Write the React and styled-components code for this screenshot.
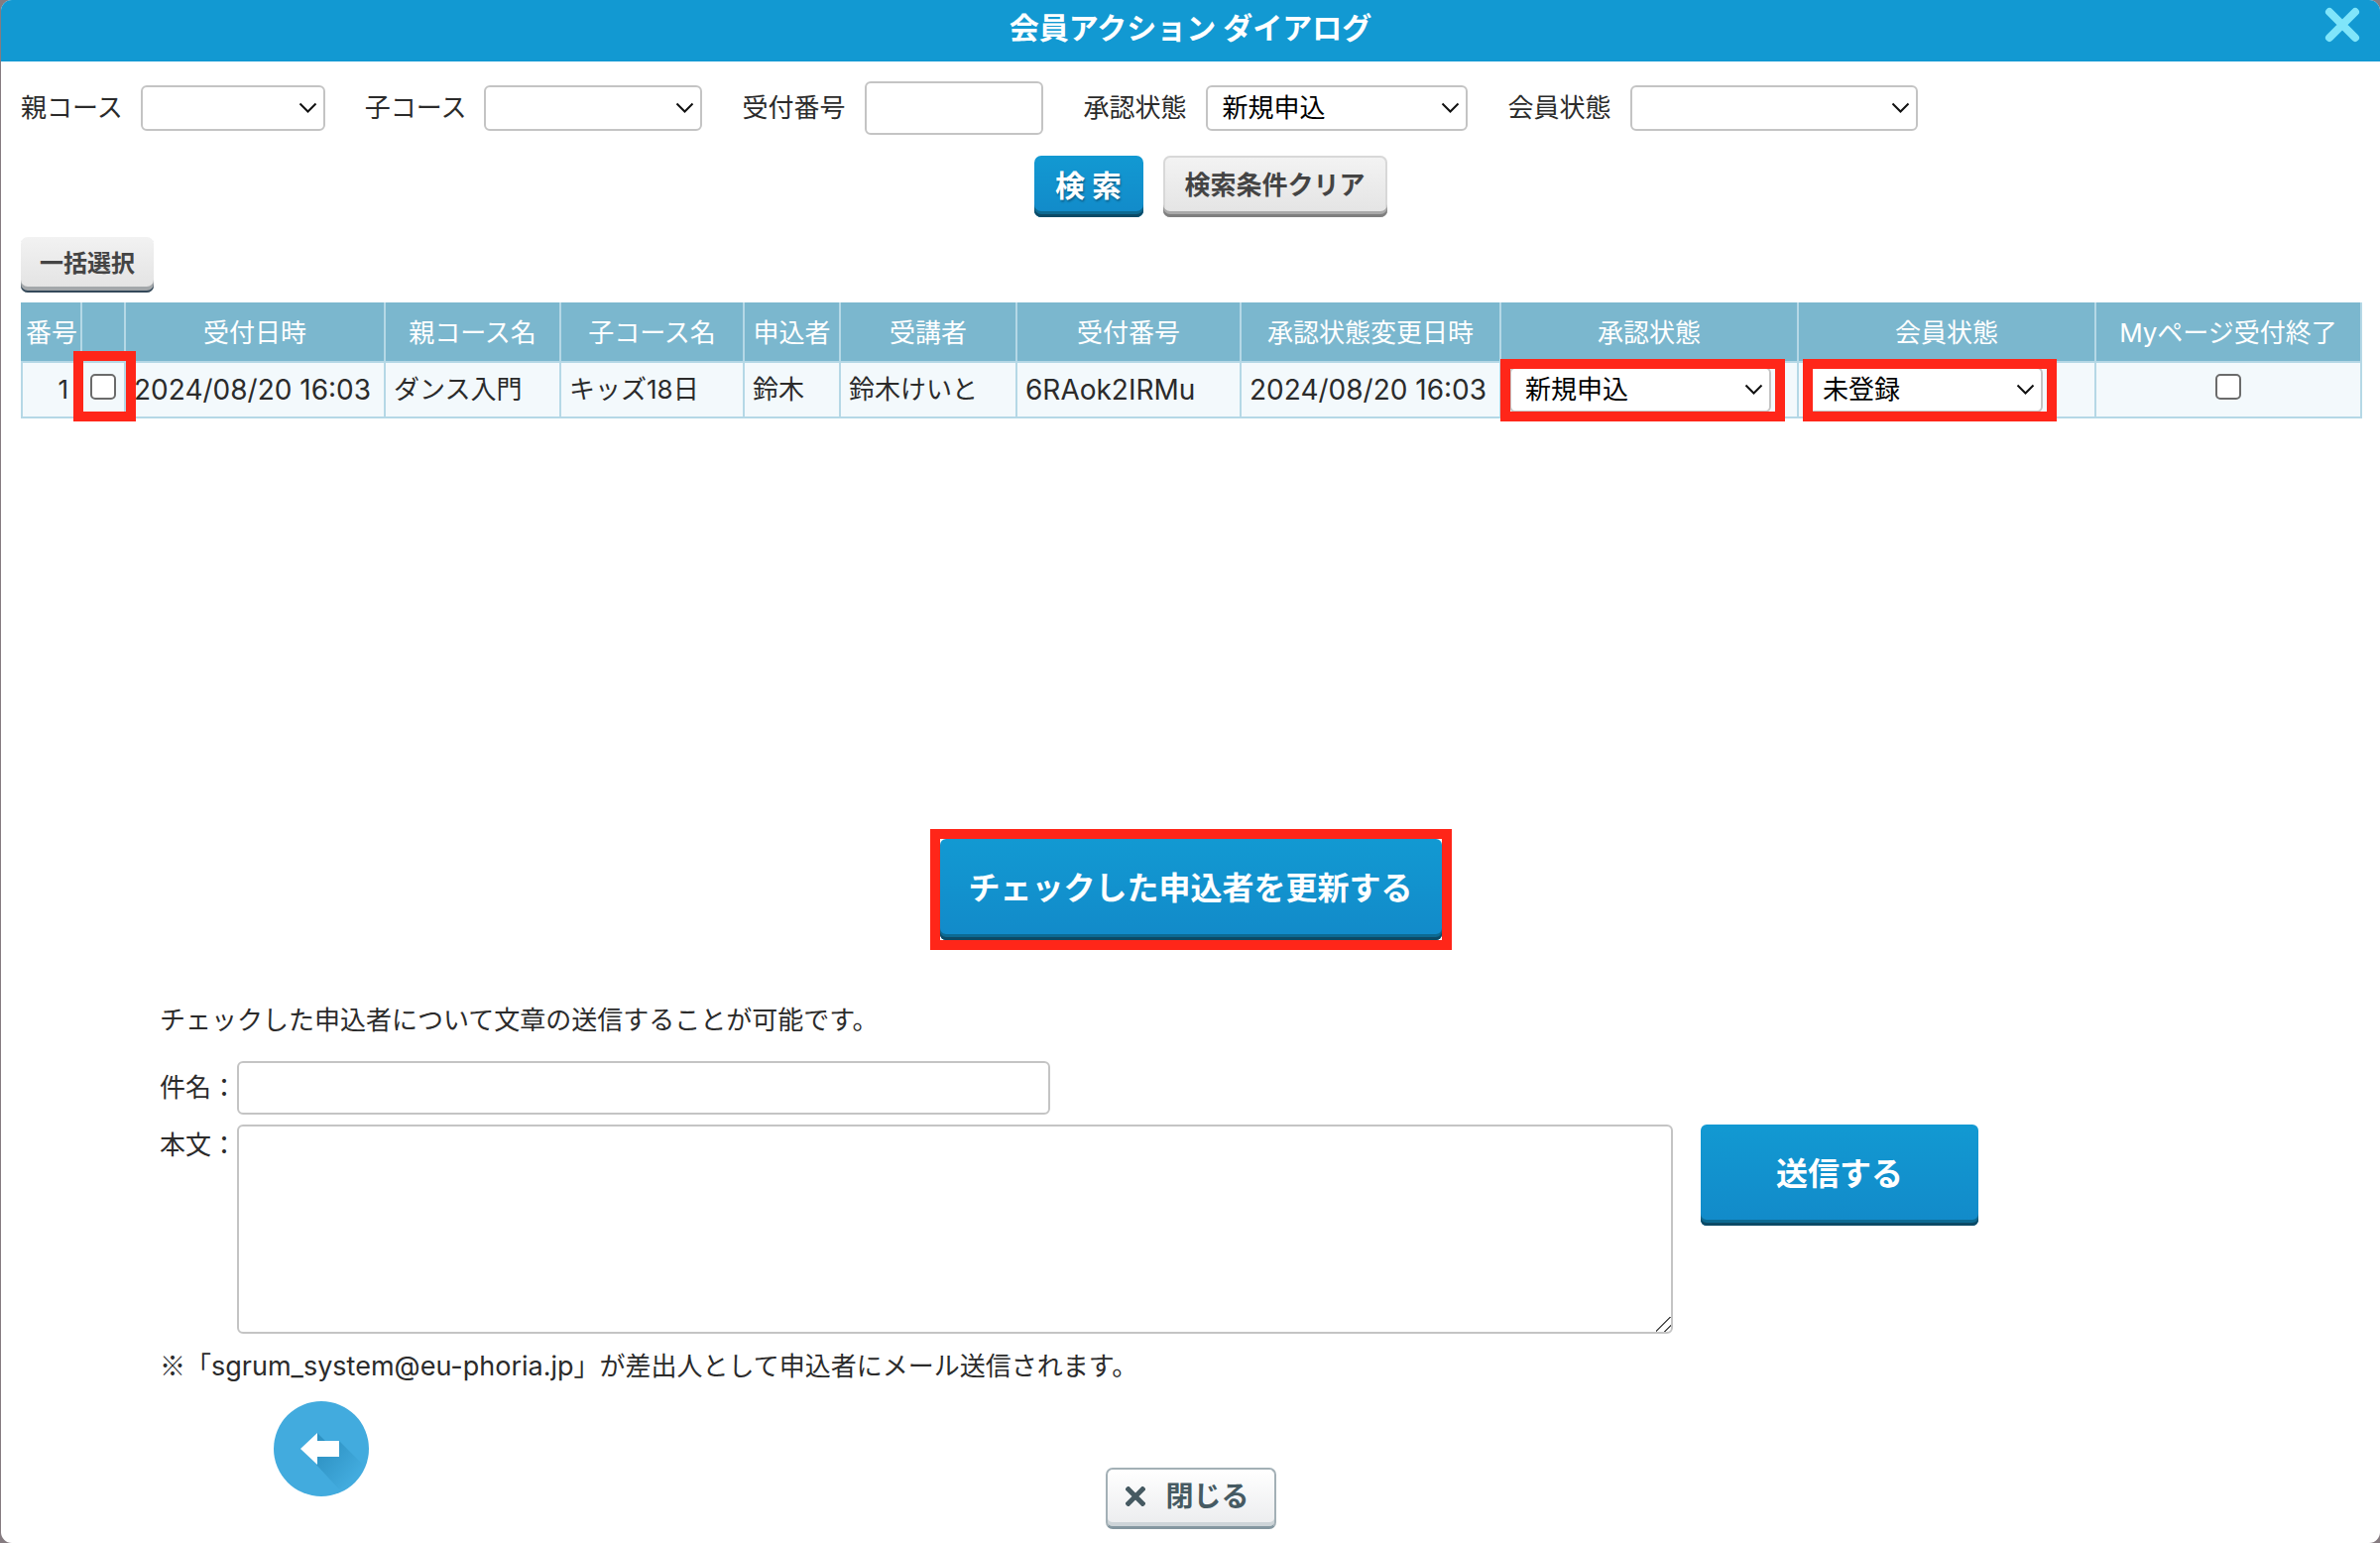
import React, { useState } from 'react';
import styled, { createGlobalStyle } from 'styled-components';

const GlobalStyle = createGlobalStyle`
    * {
        box-sizing: border-box;
    }

    body {
        margin: 0;
        background: #857b80;
        color: #2b2b2b;
        font-family: Inter, 'Noto Sans CJK JP', sans-serif;
        font-size: 26px;
        line-height: 38px;
    }

    button, input, select, textarea {
        font: inherit;
        margin: 0;
    }
`;

const Dialog = styled.div`
    display: flex;
    flex-direction: column;
    min-height: 100vh;
    margin-left: 1px;
    background: #fff;
    border-radius: 11px;
    overflow: hidden;
`;

const Header = styled.header`
    display: grid;
    grid-template-columns: 1fr auto 1fr;
    align-items: center;
    height: 62px;
    padding: 0 20px 6px;
    background: #1299d2;
    color: #fff;
`;

const Title = styled.h1`
    grid-column: 2;
    margin: 0;
    font-size: 30px;
    line-height: 38px;
    font-weight: 700;
`;

const HeaderClose = styled.button`
    display: flex;
    justify-self: end;
    padding: 0 0 6px;
    border: 0;
    background: none;
    cursor: pointer;
`;

const Content = styled.main`
    padding: 20px 20px 10px;
`;

const Filters = styled.div`
    display: flex;
    align-items: center;
    gap: 40px;
`;

const Field = styled.div`
    display: flex;
    align-items: center;
    gap: ${props => props.$gap}px;
    white-space: nowrap;
`;

const TextInput = styled.input`
    width: ${props => props.$width}px;
    height: 54px;
    padding: 0 14px;
    border: 2px solid #c4c4c4;
    border-radius: 6px;
    background: #fff;
`;

const SelectBox = styled.div`
    display: grid;
    align-items: center;
    width: ${props => props.$width}px;

    > * {
        grid-area: 1 / 1;
    }

    svg {
        justify-self: end;
        margin-right: 8px;
        pointer-events: none;
    }
`;

const StyledSelect = styled.select`
    appearance: none;
    width: 100%;
    height: 46px;
    padding: 0 30px 0 14px;
    border: 2px solid #c4c4c4;
    border-radius: 6px;
    background: #fff;
    color: #000;
`;

const Button = styled.button`
    height: 62px;
    padding: 0 0 3px;
    border: 0;
    border-radius: 7px;
    font-weight: 700;
    cursor: pointer;
`;

const BlueButton = styled(Button)`
    background: linear-gradient(#1299d2, #128ac9);
    box-shadow: inset 0 -3px #0c4a66, inset 0 -6px #0d6a92;
    color: #fff;
`;

const SearchButton = styled(BlueButton)`
    width: 110px;
    font-size: 30px;
    text-shadow: 1px 2px 2px rgba(0, 0, 0, 0.3);
`;

const LargeButton = styled(BlueButton)`
    width: ${props => props.$width}px;
    height: 102px;
    font-size: 32px;
    border-radius: 6px;
`;

const GreyButton = styled(Button)`
    width: ${props => props.$width}px;
    background: linear-gradient(#f3f3f3, #e3e3e3);
    box-shadow: inset 0 -3px #7f7f7f, inset 0 -6px #a9a9a9, inset 0 0 0 2px #d8d8d8;
    color: #444;
`;

const BulkButton = styled(Button)`
    align-self: flex-start;
    width: 134px;
    height: 56px;
    background: linear-gradient(#f2f2f2, #e2e2e2);
    box-shadow: inset 0 -2px #34495a, inset 0 -6px #a3a7aa;
    color: #444;
    font-size: 24px;
`;

const SearchActions = styled.div`
    display: flex;
    justify-content: center;
    gap: 20px;
    padding: 21px 0 20px 40px;
`;

const ListArea = styled.section`
    display: flex;
    flex-direction: column;
    gap: 10px;
    min-height: 597px;
`;

const Table = styled.table`
    width: 100%;
    table-layout: fixed;
    border-collapse: collapse;
    white-space: nowrap;
`;

const Th = styled.th`
    height: 59px;
    padding: 0;
    border: 2px solid #b5d8e6;
    border-top-color: #7bb7ce;
    background: #7bb7ce;
    color: #fff;
    font-weight: 400;

    &:first-child {
        border-left-color: #7bb7ce;
    }
`;

const Td = styled.td`
    position: relative;
    height: 56px;
    padding: 0 8px;
    border: 2px solid #b5d8e6;
    background: #f3f9fc;
    font-size: ${props => (props.$latin ? 28 : 26)}px;
`;

const NumberTd = styled(Td)`
    padding-right: 12px;
    text-align: right;
`;

const Checkbox = styled.input`
    appearance: none;
    display: block;
    width: 26px;
    height: 26px;
    margin: 0 auto 6px;
    border: 2px solid #6b6b6b;
    border-radius: 5px;
    background: #fff;

    &:checked {
        background: #1299d2;
    }
`;

/* red marker drawn over a cell */
const Marker = styled.span`
    position: absolute;
    top: ${props => props.$top}px;
    bottom: -5px;
    left: ${props => props.$left}px;
    width: ${props => props.$width}px;
    border: 10px solid #ff2619;
    pointer-events: none;
    z-index: 1;
`;

const UpdateArea = styled.div`
    display: flex;
    justify-content: center;
`;

const MarkedButton = styled.div`
    display: flex;
    border: 10px solid #ff2619;
`;

const MailForm = styled.form`
    display: flex;
    flex-direction: column;
    gap: 10px;
    padding: 50px 0 0 140px;
`;

const Note = styled.p`
    margin: 0;
    line-height: 42px;
`;

const Symbol = styled.span`
    font-family: 'Noto Sans CJK JP', sans-serif;
`;

const Address = styled.span`
    font-size: 27px;
`;

const MailRow = styled.div`
    display: flex;
    align-items: ${props => props.$align || 'center'};

    label {
        flex: 0 0 78px;
        line-height: 42px;
    }
`;

const SubjectRow = styled(MailRow)`
    padding-top: 10px;
`;

const TextArea = styled.textarea`
    flex: 0 1 1448px;
    height: 211px;
    margin-right: 28px;
    padding: 8px 14px;
    border: 2px solid #c4c4c4;
    border-radius: 6px;
    background: #fff;

    &::-webkit-resizer {
        background: linear-gradient(
            135deg,
            transparent 46%,
            #555 46%,
            #555 53%,
            transparent 53%,
            transparent 74%,
            #555 74%,
            #555 81%,
            transparent 81%
        );
    }
`;

const Footer = styled.footer`
    display: grid;
    grid-template-columns: 1fr auto 1fr;
    align-items: start;
    padding-top: 14px;
`;

const BackLink = styled.a`
    display: flex;
    width: 96px;
    margin-left: 255px;
`;

const CloseButton = styled(Button)`
    display: flex;
    align-items: center;
    justify-content: center;
    gap: 20px;
    width: 172px;
    margin-top: 67px;
    padding-right: 6px;
    border: 2px solid #a3b0b6;
    border-bottom: 3px solid #8497a0;
    background: linear-gradient(#fff, #ebecee);
    box-shadow: inset 0 -4px #cdd4d8;
    color: #465a62;
    font-size: 28px;
`;

const Select = ({ width, options, ...rest }) => (
    <SelectBox $width={width}>
        <StyledSelect {...rest}>
            {options.map(option => (
                <option key={option}>{option}</option>
            ))}
        </StyledSelect>
        <svg width="19" height="12" viewBox="0 0 19 12" fill="none" stroke="#111" strokeWidth="2">
            <path d="M1.5 1.5L9.5 9.5L17.5 1.5" />
        </svg>
    </SelectBox>
);

const BackIcon = () => (
    <svg width="96" height="96" viewBox="0 0 96 96">
        <defs>
            <linearGradient id="shade" x1="0.2" y1="0.2" x2="0.8" y2="0.8">
                <stop offset="0" stopColor="#2f93c4" />
                <stop offset="1" stopColor="#42abde" />
            </linearGradient>
        </defs>
        <circle cx="48" cy="48" r="48" fill="#42abde" />
        <path d="M44 32L52 40H66L90 64A48 48 0 0 1 66 89L43 64Z" fill="url(#shade)" />
        <path d="M27 48L44 32V40H66V56H44V64Z" fill="#fff" />
    </svg>
);

const COLUMNS = [
    { label: '番号', width: 60 },
    { label: '', width: 44 },
    { label: '受付日時', width: 262 },
    { label: '親コース名', width: 177 },
    { label: '子コース名', width: 185 },
    { label: '申込者', width: 97 },
    { label: '受講者', width: 178 },
    { label: '受付番号', width: 226 },
    { label: '承認状態変更日時', width: 262 },
    { label: '承認状態', width: 300 },
    { label: '会員状態', width: 300 },
    { label: 'Myページ受付終了', width: 268 },
];

const APPLICANTS = [
    {
        id: 1,
        receivedAt: '2024/08/20 16:03',
        parentCourse: 'ダンス入門',
        childCourse: 'キッズ18日',
        applicant: '鈴木',
        student: '鈴木けいと',
        receiptNo: '6RAok2IRMu',
        changedAt: '2024/08/20 16:03',
    },
];

const App = () => {
    const [checked, setChecked] = useState([]);

    const toggle = id => {
        setChecked(checked.includes(id) ? checked.filter(c => c !== id) : [...checked, id]);
    };

    return (
        <>
            <GlobalStyle />
            <Dialog role="dialog" aria-labelledby="dialog-title">
                <Header>
                    <Title id="dialog-title">会員アクション ダイアログ</Title>
                    <HeaderClose type="button" aria-label="閉じる">
                        <svg width="36" height="36" viewBox="0 0 36 36" stroke="#80e5fa" strokeWidth="8" strokeLinecap="round">
                            <path d="M5 5L31 31M31 5L5 31" />
                        </svg>
                    </HeaderClose>
                </Header>
                <Content>
                    <Filters>
                        <Field $gap={18}>
                            <label htmlFor="parent">親コース</label>
                            <Select id="parent" width={186} options={['']} />
                        </Field>
                        <Field $gap={18}>
                            <label htmlFor="child">子コース</label>
                            <Select id="child" width={220} options={['']} />
                        </Field>
                        <Field $gap={20}>
                            <label htmlFor="receipt">受付番号</label>
                            <TextInput id="receipt" type="text" $width={180} />
                        </Field>
                        <Field $gap={20}>
                            <label htmlFor="approval">承認状態</label>
                            <Select id="approval" width={264} options={['新規申込']} />
                        </Field>
                        <Field $gap={20}>
                            <label htmlFor="member">会員状態</label>
                            <Select id="member" width={290} options={['']} />
                        </Field>
                    </Filters>
                    <SearchActions>
                        <SearchButton type="button">検 索</SearchButton>
                        <GreyButton type="button" $width={226}>検索条件クリア</GreyButton>
                    </SearchActions>
                    <ListArea>
                        <BulkButton type="button" onClick={() => setChecked(APPLICANTS.map(a => a.id))}>
                            一括選択
                        </BulkButton>
                        <Table>
                            <colgroup>
                                {COLUMNS.map((column, i) => (
                                    <col key={i} style={{ width: column.width }} />
                                ))}
                            </colgroup>
                            <thead>
                                <tr>
                                    {COLUMNS.map((column, i) => (
                                        <Th key={i}>{column.label}</Th>
                                    ))}
                                </tr>
                            </thead>
                            <tbody>
                                {APPLICANTS.map(row => (
                                    <tr key={row.id}>
                                        <NumberTd>{row.id}</NumberTd>
                                        <Td>
                                            <Checkbox
                                                type="checkbox"
                                                aria-label="選択"
                                                checked={checked.includes(row.id)}
                                                onChange={() => toggle(row.id)}
                                            />
                                            <Marker $top={-12} $left={-9} $width={63} />
                                        </Td>
                                        <Td $latin>{row.receivedAt}</Td>
                                        <Td>{row.parentCourse}</Td>
                                        <Td>{row.childCourse}</Td>
                                        <Td>{row.applicant}</Td>
                                        <Td>{row.student}</Td>
                                        <Td $latin>{row.receiptNo}</Td>
                                        <Td $latin>{row.changedAt}</Td>
                                        <Td>
                                            <Select width={264} options={['新規申込']} aria-label="承認状態" />
                                            <Marker $top={-4} $left={-1} $width={287} />
                                        </Td>
                                        <Td>
                                            <Select width={238} options={['未登録']} aria-label="会員状態" />
                                            <Marker $top={-4} $left={4} $width={256} />
                                        </Td>
                                        <Td>
                                            <Checkbox type="checkbox" aria-label="Myページ受付終了" />
                                        </Td>
                                    </tr>
                                ))}
                            </tbody>
                        </Table>
                    </ListArea>
                    <UpdateArea>
                        <MarkedButton>
                            <LargeButton type="button" $width={506}>チェックした申込者を更新する</LargeButton>
                        </MarkedButton>
                    </UpdateArea>
                    <MailForm>
                        <Note>チェックした申込者について文章の送信することが可能です。</Note>
                        <SubjectRow>
                            <label htmlFor="subject">件名：</label>
                            <TextInput id="subject" type="text" $width={820} />
                        </SubjectRow>
                        <MailRow $align="flex-start">
                            <label htmlFor="body">本文：</label>
                            <TextArea id="body" />
                            <LargeButton type="button" $width={280}>送信する</LargeButton>
                        </MailRow>
                        <Note>
                            <Symbol>※</Symbol>「<Address>sgrum_system@eu-phoria.jp</Address>」が差出人として申込者にメール送信されます。
                        </Note>
                    </MailForm>
                    <Footer>
                        <BackLink href="#back" aria-label="戻る">
                            <BackIcon />
                        </BackLink>
                        <CloseButton type="button">
                            <svg width="20" height="20" viewBox="0 0 20 20" stroke="#465a62" strokeWidth="5">
                                <path d="M1 1L19 19M19 1L1 19" />
                            </svg>
                            閉じる
                        </CloseButton>
                    </Footer>
                </Content>
            </Dialog>
        </>
    );
};

export default App;
